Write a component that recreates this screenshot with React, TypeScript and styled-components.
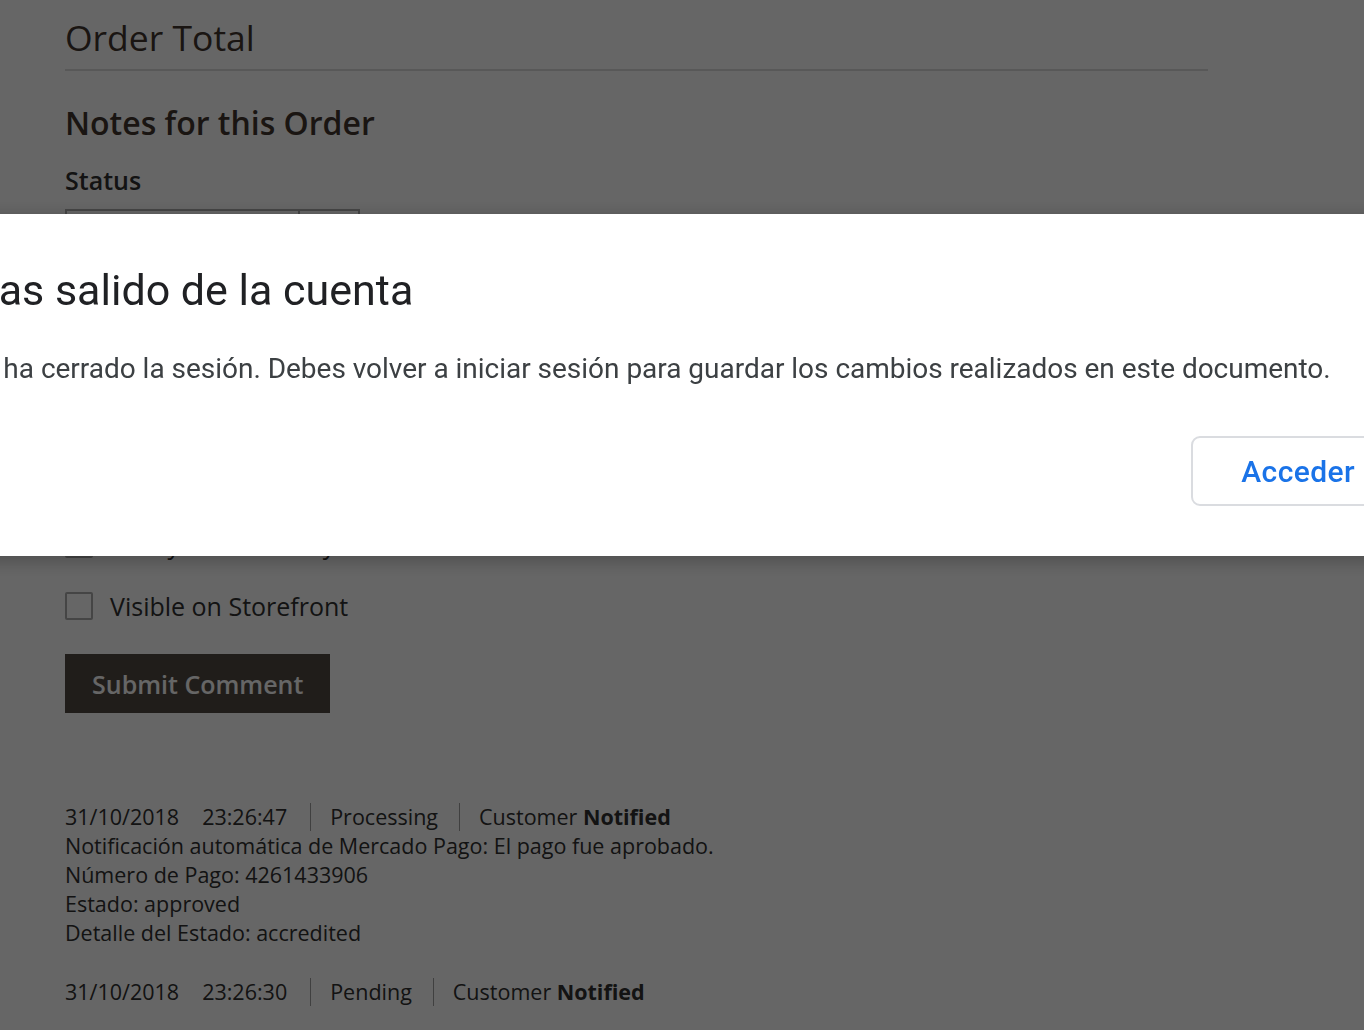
import React from "react";
import styled, { createGlobalStyle } from "styled-components";

const Global = createGlobalStyle`
  html, body {
    margin: 0;
    padding: 0;
    overflow: hidden;
    background: #ffffff;
  }
  body {
    font-family: "Open Sans", "Liberation Sans", sans-serif;
    color: #303030;
  }
  * { box-sizing: border-box; }
`;

const Page = styled.main`
  width: 1364px;
  height: 1030px;
  padding: 13px 156px 0 65px;
  display: flex;
  flex-direction: column;
`;

const OrderTotal = styled.h2`
  margin: 0;
  font-size: 35.5px;
  line-height: 49px;
  font-weight: 400;
  color: #41362f;
  padding-bottom: 7px;
  border-bottom: 2px solid #dcdcdc;
`;

const NotesTitle = styled.h3`
  margin: 31px 0 0;
  font-size: 32px;
  line-height: 42px;
  font-weight: 600;
  color: #41362f;
`;

const FieldLabel = styled.label<{ $gap?: number }>`
  display: block;
  margin-top: ${(p) => p.$gap ?? 19}px;
  font-size: 25px;
  line-height: 34px;
  font-weight: 600;
  color: #303030;
`;

const Select = styled.div`
  margin-top: 12px;
  width: 295px;
  height: 56px;
  border: 2px solid #adadad;
  display: flex;
  background: #fff;
`;

const SelectValue = styled.span`
  flex: 1;
  font-size: 25px;
  line-height: 52px;
  padding-left: 14px;
`;

const SelectArrow = styled.span`
  width: 60px;
  border-left: 2px solid #adadad;
`;

const TextArea = styled.div`
  margin-top: 12px;
  width: 100%;
  height: 160px;
  border: 2px solid #adadad;
  background: #fff;
`;

const CheckRow = styled.label<{ $gap: number }>`
  margin-top: ${(p) => p.$gap}px;
  display: flex;
  align-items: center;
  gap: 17px;
  height: 34px;
  font-size: 25px;
  line-height: 34px;
  color: #303030;
`;

const Box = styled.span`
  width: 28px;
  height: 28px;
  border: 2px solid #adadad;
  border-radius: 2px;
  background: #fff;
  flex: none;
`;

const SubmitButton = styled.button`
  margin-top: 31px;
  align-self: flex-start;
  height: 59px;
  padding: 0 25px;
  background: #514943;
  border: 2px solid #514943;
  color: #ffffff;
  font-family: "Open Sans", "Liberation Sans", sans-serif;
  font-size: 25px;
  font-weight: 600;
`;

const History = styled.ul`
  list-style: none;
  margin: 89px 0 0;
  padding: 0;
  display: flex;
  flex-direction: column;
  gap: 30px;
`;

const Entry = styled.li`
  font-size: 21.5px;
  line-height: 29px;
  color: #303030;
`;

const EntryHead = styled.div`
  display: flex;
  align-items: center;
  height: 29px;
`;

const Stamp = styled.span`
  margin-right: 23px;
`;

const HeadItem = styled.span`
  padding: 0 21px 0 19px;
  border-left: 1px solid #a0a0a0;
  height: 28px;
  line-height: 28px;
  &:last-child { padding-right: 0; }
`;

const Strong = styled.b`
  font-weight: 700;
`;

const Overlay = styled.div`
  position: fixed;
  inset: 0;
  background: rgba(0, 0, 0, 0.6);
  z-index: 10;
`;

const Dialog = styled.section`
  position: fixed;
  top: 214px;
  left: -56px;
  width: 1485px;
  height: 342px;
  background: #ffffff;
  z-index: 20;
  padding: 50px 24px 0 24px;
  box-shadow: 0 4px 18px rgba(0, 0, 0, 0.28);
  display: flex;
  flex-direction: column;
  font-family: Roboto, "Noto Sans", sans-serif;
`;

const DialogTitle = styled.h1`
  margin: 0;
  font-size: 43px;
  line-height: 52px;
  font-weight: 400;
  color: #202124;
  white-space: nowrap;
`;

const DialogText = styled.p`
  margin: 34px 0 0 -3px;
  font-size: 28px;
  line-height: 37px;
  color: #3c4043;
  white-space: nowrap;
  letter-spacing: -0.02px;
`;

const Actions = styled.div`
  margin-top: 49px;
  display: flex;
  justify-content: flex-end;
`;

const OutlineButton = styled.button`
  height: 70px;
  padding: 0 48px;
  border: 2px solid #dadce0;
  border-radius: 9px;
  background: #ffffff;
  color: #1a73e8;
  font-family: Roboto, "Noto Sans", sans-serif;
  font-size: 30px;
  font-weight: 500;
  letter-spacing: 0.4px;
`;

const entries = [
  {
    date: "31/10/2018",
    time: "23:26:47",
    status: "Processing",
    lines: [
      "Notificación automática de Mercado Pago: El pago fue aprobado.",
      "Número de Pago: 4261433906",
      "Estado: approved",
      "Detalle del Estado: accredited",
    ],
  },
  { date: "31/10/2018", time: "23:26:30", status: "Pending", lines: [] as string[] },
];

export default function App() {
  return (
    <>
      <Global />
      <Page>
        <OrderTotal>Order Total</OrderTotal>
        <NotesTitle>Notes for this Order</NotesTitle>
        <FieldLabel>Status</FieldLabel>
        <Select>
          <SelectValue>Processing</SelectValue>
          <SelectArrow />
        </Select>
        <FieldLabel $gap={24}>Comment</FieldLabel>
        <TextArea />
        <CheckRow $gap={32}>
          <Box />
          Notify Customer by Email
        </CheckRow>
        <CheckRow $gap={28}>
          <Box />
          Visible on Storefront
        </CheckRow>
        <SubmitButton>Submit Comment</SubmitButton>
        <History>
          {entries.map((e) => (
            <Entry key={e.time}>
              <EntryHead>
                <Stamp>{e.date}</Stamp>
                <Stamp>{e.time}</Stamp>
                <HeadItem>{e.status}</HeadItem>
                <HeadItem>
                  Customer <Strong>Notified</Strong>
                </HeadItem>
              </EntryHead>
              {e.lines.map((l) => (
                <div key={l}>{l}</div>
              ))}
            </Entry>
          ))}
        </History>
      </Page>
      <Overlay />
      <Dialog role="dialog">
        <DialogTitle>Has salido de la cuenta</DialogTitle>
        <DialogText>
          Se ha cerrado la sesión. Debes volver a iniciar sesión para guardar los cambios realizados en este documento.
        </DialogText>
        <Actions>
          <OutlineButton>Acceder</OutlineButton>
        </Actions>
      </Dialog>
    </>
  );
}
